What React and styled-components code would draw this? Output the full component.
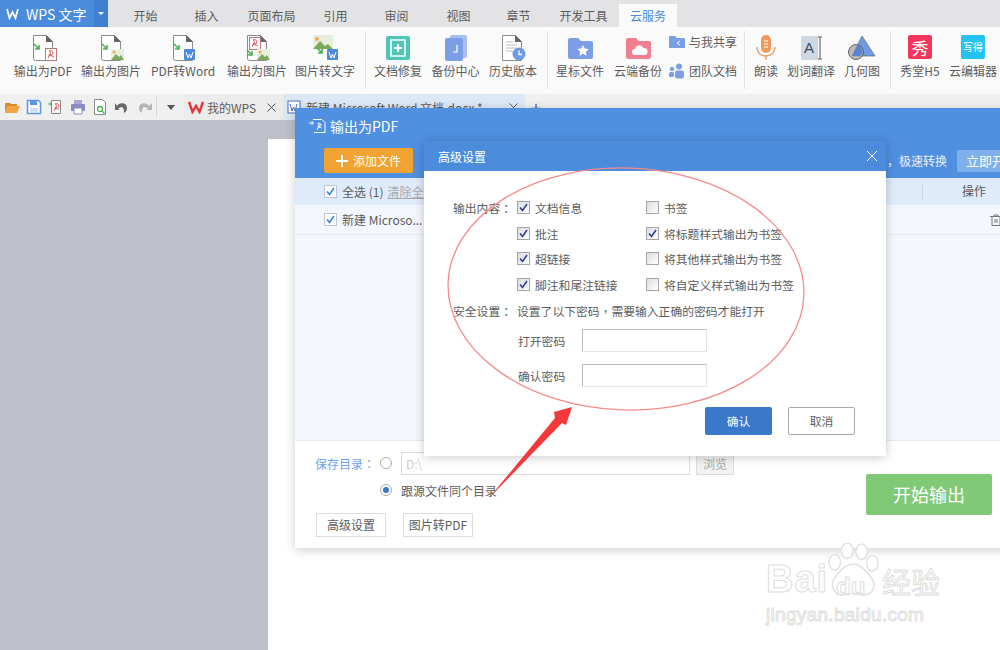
import styled, { createGlobalStyle } from "styled-components";

const GlobalStyle = createGlobalStyle`
    html, body {
        margin: 0;
        padding: 0;
        background: #fff;
    }
    * {
        box-sizing: border-box;
    }
    body {
        font-family: "Noto Sans CJK SC", "Liberation Sans", sans-serif;
        font-size: 12px;
        color: #5c5c5c;
    }
`;

const Screen = styled.div`
    position: relative;
    width: 1000px;
    height: 650px;
    overflow: hidden;
    display: flex;
    flex-direction: column;
    background: #bdc0c8;
`;

/* title bar */
const TitleBar = styled.div`
    height: 27px;
    flex: none;
    display: flex;
    background: #e3e3e5;
`;
const Logo = styled.div`
    width: 94px;
    display: flex;
    align-items: center;
    gap: 7px;
    padding-left: 6px;
    background: #4a8bdc;
    color: #fff;
    font-size: 14px;
    white-space: nowrap;
`;
const LogoArrow = styled.div`
    width: 14px;
    display: flex;
    align-items: center;
    justify-content: center;
    background: #3f7fd2;
    &::after {
        content: "";
        border: 3px solid transparent;
        border-top: 3px solid #fff;
        margin-top: 3px;
    }
`;
const Tabs = styled.div`
    display: flex;
    padding: 4px 0 0 7px;
`;
const Tab = styled.div`
    width: ${(p) => p.$w}px;
    display: flex;
    align-items: center;
    justify-content: center;
    color: ${(p) => (p.$active ? "#4a8bdc" : "#5c5c5c")};
    background: ${(p) => (p.$active ? "#fafafa" : "transparent")};
`;

/* ribbon */
const Ribbon = styled.div`
    height: 67px;
    flex: none;
    display: flex;
    padding: 4px 0 5px 9px;
    background: #fafafa;
`;
const Item = styled.div`
    width: ${(p) => p.$w}px;
    flex: none;
    display: flex;
    flex-direction: column;
    align-items: center;
    padding-top: 4px;
    svg {
        display: block;
    }
`;
const ItemLabel = styled.span`
    margin-top: 2px;
    line-height: 16px;
    white-space: nowrap;
`;
const Sep = styled.div`
    width: 1px;
    flex: none;
    margin: 0 3px 0 ${(p) => p.$left}px;
    background: #e2e2e2;
`;
const Stack = styled.div`
    width: 72px;
    flex: none;
    display: flex;
    flex-direction: column;
    gap: 11px;
    padding: 2px 0 0 2px;
`;
const StackRow = styled.div`
    display: flex;
    align-items: center;
    gap: 4px;
    line-height: 18px;
    white-space: nowrap;
`;
const Tile = styled.div`
    width: 24px;
    height: 24px;
    margin-bottom: 2px;
    border-radius: 2px;
    display: flex;
    align-items: center;
    justify-content: center;
    background: ${(p) => p.$bg};
    color: #fff;
    font-size: ${(p) => p.$size}px;
    line-height: 1;
`;

/* quick access bar */
const QuickBar = styled.div`
    height: 26px;
    flex: none;
    display: flex;
    align-items: stretch;
    padding-left: 4px;
    background: #f0f0f0;
`;
const QuickIcons = styled.div`
    display: flex;
    align-items: center;
    gap: 6px;
    width: 152px;
    flex: none;
`;
const QuickDivider = styled.div`
    width: 1px;
    height: 20px;
    align-self: center;
    background: #d5d5d5;
`;
const Drop = styled.div`
    width: 27px;
    display: flex;
    align-items: center;
    justify-content: center;
    &::after {
        content: "";
        border: 4px solid transparent;
        border-top: 5px solid #555;
        margin-top: 5px;
    }
`;
const DocTab = styled.div`
    width: ${(p) => p.$w}px;
    flex: none;
    display: flex;
    align-items: center;
    gap: 3px;
    padding: 0 7px 0 4px;
    white-space: nowrap;
    overflow: hidden;
    background: ${(p) => (p.$active ? "#dce8f6" : "#ececec")};
`;
const DocTabTitle = styled.span`
    flex: 1;
`;
const Plus = styled.span`
    margin-left: 6px;
    align-self: center;
    font-size: 18px;
    color: #666;
`;

/* document area */
const Canvas = styled.div`
    flex: 1;
    padding: 19px 0 0 268px;
    display: flex;
    background: #bdc0c8;
`;
const Paper = styled.div`
    flex: 1;
    background: #fff;
`;

/* PDF window */
const PdfWindow = styled.div`
    position: absolute;
    left: 295px;
    top: 108px;
    width: 760px;
    height: 440px;
    display: flex;
    flex-direction: column;
    background: #fff;
    box-shadow: 0 2px 10px rgba(0, 0, 0, 0.2);
`;
const PdfHeader = styled.div`
    height: 70px;
    flex: none;
    padding: 0 0 0 14px;
    background: #4f90e0;
    color: #fff;
`;
const PdfTitle = styled.div`
    height: 36px;
    display: flex;
    align-items: center;
    gap: 3px;
    font-size: 14px;
`;
const PdfTools = styled.div`
    display: flex;
    align-items: center;
    padding: 4px 0 0 15px;
`;
const AddButton = styled.div`
    width: 89px;
    height: 25px;
    display: flex;
    align-items: center;
    justify-content: center;
    gap: 5px;
    border-radius: 2px;
    background: #f0a330;
    color: #fff;
`;
const Promo = styled.span`
    margin-left: auto;
    color: #eaf2fc;
`;
const PromoButton = styled.div`
    width: 98px;
    height: 22px;
    margin: 0 0 0 10px;
    padding-left: 9px;
    line-height: 21px;
    font-size: 13px;
    border-radius: 2px;
    background: #7fb0ec;
    color: #fff;
    white-space: nowrap;
`;
const FileRow = styled.div`
    height: ${(p) => p.$h}px;
    flex: none;
    display: flex;
    align-items: center;
    gap: 5px;
    padding-left: 29px;
    background: ${(p) => (p.$head ? "#deebfb" : "#f4f8fe")};
    border-bottom: ${(p) => (p.$head ? "none" : "1px solid #e7ebf1")};
`;
const ClearLink = styled.span`
    color: #aaa;
    text-decoration: underline;
    margin-left: -1px;
`;
const HeadDivider = styled.div`
    position: absolute;
    left: 627px;
    top: 77px;
    width: 1px;
    height: 14px;
    background: #c7d2de;
`;
const HeadOperate = styled.span`
    position: absolute;
    left: 667px;
    top: 73px;
    line-height: 20px;
`;
const RowTrash = styled.span`
    position: absolute;
    left: 695px;
    top: 104px;
`;
const ListBody = styled.div`
    flex: 1;
    background: #f4f8fe;
    border-bottom: 1px solid #e7ebf1;
`;
const PdfFooter = styled.div`
    height: 107px;
    flex: none;
    padding: 10px 0 0 20px;
    position: relative;
`;
const SaveRow = styled.div`
    height: 24px;
    margin-top: ${(p) => p.$top || 0}px;
    display: flex;
    align-items: center;
    color: #6a9fe6;
`;
const SaveLabel = styled.span`
    width: 65px;
    flex: none;
    white-space: nowrap;
`;
const Colon = styled.span`
    font-family: "Noto Sans CJK TC", sans-serif;
`;
const Radio = styled.span`
    width: 12px;
    height: 12px;
    flex: none;
    display: flex;
    align-items: center;
    justify-content: center;
    border: 1px solid #aaa;
    border-radius: 50%;
    background: #fff;
    &::after {
        content: "";
        width: 6px;
        height: 6px;
        border-radius: 50%;
        background: ${(p) => (p.$on ? "#3a78c9" : "transparent")};
    }
`;
const PathInput = styled.div`
    width: 289px;
    height: 23px;
    margin-left: 9px;
    padding-left: 4px;
    line-height: 22px;
    border: 1px solid #ddd;
    color: #ccc;
`;
const BrowseButton = styled.div`
    width: 38px;
    height: 23px;
    margin-left: 6px;
    line-height: 21px;
    text-align: center;
    border: 1px solid #ddd;
    background: #f2f2f2;
    color: #aaa;
`;
const SameDir = styled.span`
    margin-left: 9px;
    color: #5c5c5c;
`;
const FooterButtons = styled.div`
    display: flex;
    gap: 17px;
    margin: 11px 0 0 1px;
`;
const PlainButton = styled.div`
    width: 70px;
    height: 24px;
    line-height: 22px;
    text-align: center;
    border: 1px solid #ddd;
`;
const StartButton = styled.div`
    position: absolute;
    left: 571px;
    top: 33px;
    width: 126px;
    height: 41px;
    border-radius: 2px;
    line-height: 41px;
    text-align: center;
    font-size: 18px;
    background: #7fc977;
    color: #fff;
`;

/* advanced settings dialog */
const Dialog = styled.div`
    position: absolute;
    left: 424px;
    top: 141px;
    width: 462px;
    height: 315px;
    display: flex;
    flex-direction: column;
    background: #fff;
    box-shadow: 0 1px 10px rgba(0, 0, 0, 0.22);
`;
const DialogHeader = styled.div`
    height: 30px;
    flex: none;
    display: flex;
    align-items: center;
    justify-content: space-between;
    padding: 0 8px 0 14px;
    background: #4b8cdc;
    color: #fff;
`;
const DialogBody = styled.div`
    flex: 1;
    padding: 24px 0 0 29px;
    display: flex;
    flex-direction: column;
    font-size: 11.8px;
`;
const OptionGrid = styled.div`
    display: grid;
    grid-template-columns: 64px 129px 1fr;
    grid-auto-rows: 25.5px;
    align-items: center;
`;
const FieldLabel = styled.span`
    white-space: nowrap;
`;
const Option = styled.label`
    display: flex;
    align-items: center;
    gap: 5px;
    white-space: nowrap;
`;
const Box = styled.span`
    width: 13px;
    height: 13px;
    flex: none;
    display: flex;
    align-items: center;
    justify-content: center;
    border: 1px solid ${(p) => (p.$light ? "#b9c6d6" : "#a5a5a5")};
    background: ${(p) => (p.$light ? "#fff" : "linear-gradient(135deg, #dcdcdc, #fff)")};
    color: ${(p) => (p.$light ? "#3a83de" : "#30409a")};
`;
const SecurityRow = styled.div`
    display: flex;
    align-items: center;
    height: 26px;
`;
const SecurityLabel = styled.span`
    width: 64px;
    flex: none;
    white-space: nowrap;
`;
const PasswordRow = styled.div`
    display: flex;
    align-items: center;
    margin: ${(p) => p.$top}px 0 0 65px;
`;
const PasswordLabel = styled.span`
    width: 64px;
    flex: none;
`;
const PasswordBox = styled.div`
    width: 125px;
    height: 23px;
    border: 1px solid #bbb;
    border-bottom-color: #e2e6ee;
    border-right-color: #e2e6ee;
    border-radius: 1px;
`;
const DialogActions = styled.div`
    display: flex;
    gap: 16px;
    margin: 20px 0 0 252px;
`;
const DialogButton = styled.div`
    width: 67px;
    height: 28px;
    line-height: ${(p) => (p.$primary ? 28 : 26)}px;
    text-align: center;
    border-radius: 2px;
    border: ${(p) => (p.$primary ? "none" : "1px solid #aaa")};
    background: ${(p) => (p.$primary ? "#3a78c9" : "#fff")};
    color: ${(p) => (p.$primary ? "#fff" : "#5c5c5c")};
`;

/* annotation and watermark lie over the windows */
const Annotation = styled.svg`
    position: absolute;
    left: 0;
    top: 0;
    pointer-events: none;
`;
const Watermark = styled.div`
    position: absolute;
    left: 766px;
    top: 543px;
    width: 190px;
    color: transparent;
    -webkit-text-stroke: 1px #dedede;
    font-family: "Liberation Sans", sans-serif;
    white-space: nowrap;
`;
const MarkBrand = styled.div`
    position: relative;
    height: 58px;
    display: flex;
    align-items: flex-end;
`;
const MarkBai = styled.span`
    width: 61px;
    font-size: 38px;
    font-weight: bold;
    line-height: 44px;
    letter-spacing: 1px;
`;
const MarkDu = styled.span`
    position: relative;
    width: 55px;
    padding-left: 9px;
    font-size: 24px;
    font-weight: bold;
    line-height: 28px;
`;
const MarkCn = styled.span`
    font-family: "Noto Sans CJK SC", sans-serif;
    font-size: 29px;
    line-height: 40px;
`;
const MarkUrl = styled.div`
    margin-top: 3px;
    font-size: 19px;
    line-height: 22px;
    letter-spacing: 0.3px;
`;
const PawMark = styled.svg`
    position: absolute;
    left: 60px;
    top: 0;
`;

const Paw = () => (
    <PawMark width="54" height="58" viewBox="0 0 56 60" fill="#fff" stroke="#e0e0e0" strokeWidth="1.5">
        <ellipse cx="22" cy="8" rx="6" ry="8" />
        <ellipse cx="37" cy="9" rx="6" ry="8" />
        <ellipse cx="9" cy="20" rx="6" ry="8" />
        <ellipse cx="48" cy="21" rx="6" ry="8" />
        <path d="M28 22c-9 0-14 8-19 14-6 8 0 19 9 17 6-1 14-1 20 0 10 2 15-9 9-17-5-6-10-14-19-14z" />
    </PawMark>
);

/* ribbon drawings */
const Arrow = ({ x = 6, y = 9 }) => (
    <path d={`M${x} ${y}l5 5m0-4v4h-4`} fill="none" stroke="#4caf50" strokeWidth="1.6" />
);
const Doc = () => (
    <>
        <path d="M5.5 .5h13l6 6v19h-17a2 2 0 0 1-2-2z" fill="#fff" stroke="#8a8a8a" />
        <path d="M18 0l7 7h-7z" fill="#666" />
    </>
);
const PdfBadge = ({ x = 17, y = 13 }) => (
    <g transform={`translate(${x} ${y})`}>
        <rect x=".5" y=".5" width="11" height="12" fill="#fff" stroke="#b77" />
        <path d="M3 10l2-4c1-2 0-3-1-3M4 3c2-1 4 0 4 2s-3 2-4 2c-1 1 3 0 5 2" fill="none" stroke="#d9534f" />
    </g>
);
const PicBadge = ({ x = 15, y = 14 }) => (
    <g transform={`translate(${x} ${y})`}>
        <rect width="13" height="11" fill="#e8f0dd" />
        <path d="M0 11l5-6 3 3 2-2 3 5z" fill="#7ea85b" />
        <circle cx="3" cy="3" r="1.5" fill="#f2a65a" />
    </g>
);
const WordBadge = ({ x = 16, y = 14 }) => (
    <g transform={`translate(${x} ${y})`}>
        <rect width="11" height="11" rx="1" fill="#4a8be0" />
        <path d="M2 3l2 6 1.500-4 1.500 4 2-6" fill="none" stroke="#fff" />
    </g>
);
const RibbonSvg = ({ children, w = 30 }) => (
    <svg width={w} height="26" viewBox={`0 0 ${w} 26`}>
        {children}
    </svg>
);
const PdfOut = () => (
    <RibbonSvg>
        <Doc />
        <Arrow />
        <PdfBadge />
    </RibbonSvg>
);
const PicOut = () => (
    <RibbonSvg>
        <Doc />
        <Arrow />
        <PicBadge />
    </RibbonSvg>
);
const WordOut = () => (
    <RibbonSvg>
        <Doc />
        <Arrow />
        <WordBadge />
    </RibbonSvg>
);
const PdfPic = () => (
    <RibbonSvg>
        <Doc />
        <g transform="translate(-4 -10)">
            <PdfBadge x={11} y={12} />
        </g>
        <Arrow x={5} y={15} />
        <PicBadge />
    </RibbonSvg>
);
const PicWord = () => (
    <RibbonSvg>
        <rect x="3" y="0" width="20" height="14" fill="#e6efdc" />
        <circle cx="7" cy="4" r="2" fill="#f2a65a" />
        <path d="M3 14l7-8 5 5 3-2 5 5z" fill="#7ea85b" />
        <Arrow x={7} y={13} />
        <WordBadge x={17} y={14} />
    </RibbonSvg>
);
const Repair = () => (
    <RibbonSvg w={26}>
        <rect x="1" y="1" width="24" height="24" rx="2" fill="#4fc5b8" />
        <rect x="6" y="5" width="14" height="16" fill="none" stroke="#fff" strokeWidth="1.500" />
        <path d="M13 9v8M9 13h8" stroke="#fff" strokeWidth="2" />
    </RibbonSvg>
);
const Backup = () => (
    <RibbonSvg w={24}>
        <rect x="6" y="0" width="17" height="23" rx="2" fill="#a9c0ee" />
        <rect x="1" y="3" width="18" height="23" rx="2" fill="#7b9fe6" />
        <path d="M13 10v7H9" fill="none" stroke="#fff" strokeWidth="1.200" />
    </RibbonSvg>
);
const History = () => (
    <RibbonSvg w={26}>
        <path d="M2.500 .5h13l6 6v19h-19z" fill="#fff" stroke="#8a8a8a" />
        <path d="M15 0l7 7h-7z" fill="#666" />
        <path d="M6 7h7M6 10h11M6 13h11M6 16h7" stroke="#bbb" />
        <circle cx="19" cy="19" r="6.500" fill="#6f9ae6" />
        <path d="M19 15.500v4h3" fill="none" stroke="#fff" strokeWidth="1.300" />
    </RibbonSvg>
);
const Folder = ({ color, children }) => (
    <RibbonSvg w={26}>
        <path d="M1 5a2 2 0 0 1 2-2h8l3 3h10a2 2 0 0 1 2 2v14a2 2 0 0 1-2 2H3a2 2 0 0 1-2-2z" fill={color} />
        {children}
    </RibbonSvg>
);
const Microphone = () => (
    <RibbonSvg w={20}>
        <rect x="5" y="0" width="10" height="18" rx="5" fill="#ee9a5d" />
        <path d="M8 6h4M8 9h4M8 12h4" stroke="#fff" />
        <path d="M1 12c0 6 4 9 9 9s9-3 9-9M10 21v4" fill="none" stroke="#ee9a5d" strokeWidth="1.300" />
    </RibbonSvg>
);
const SelectWord = () => (
    <RibbonSvg w={22}>
        <rect x="1" y="1" width="17" height="24" fill="#ccd8e6" />
        <text x="4" y="18" fontSize="15" fill="#3f4a5a" fontFamily="Liberation Sans">A</text>
        <path d="M18 2h4M20 2v22M18 24h4" stroke="#555" fill="none" />
    </RibbonSvg>
);
const Shapes = () => (
    <RibbonSvg>
        <path d="M15 1l13 20H5z" fill="#6f9ae6" stroke="#667" strokeWidth=".7" />
        <circle cx="9" cy="17" r="7.500" fill="#a5a5a5" fillOpacity=".75" stroke="#666" />
        <path d="M5 21h7.500a7.500 7.500 0 0 0 3-6L11 9z" fill="#5a84d0" />
    </RibbonSvg>
);

/* quick access drawings */
const Q = ({ children }) => (
    <svg width="16" height="16" viewBox="0 0 16 16" fill="none">
        {children}
    </svg>
);
const quickIcons = [
    <Q key="open">
        <path d="M1 4h5l1 1h6v2H4l-3 7z" fill="#d98a2b" />
        <path d="M4 7h12l-3 7H1z" fill="#f0a545" />
    </Q>,
    <Q key="save">
        <path d="M1.500 1.500h11l2 2v11h-13z" fill="#fff" stroke="#5d95e3" strokeWidth="1.500" />
        <rect x="4" y="2" width="7" height="4" fill="#5d95e3" />
        <rect x="4" y="9" width="8" height="5" fill="#cfe0f7" />
    </Q>,
    <Q key="pdf">
        <path d="M3.500 1.500h9v13h-9z" fill="#fff" stroke="#888" />
        <path d="M0 5h3M2 3.500L3.500 5 2 6.500" stroke="#4caf50" />
        <path d="M6 12l2-4c1-2 0-3-1-3M7 5c2-1 4 0 4 2s-3 2-4 2c-1 1 3 0 4 2" stroke="#d9534f" />
    </Q>,
    <Q key="print">
        <path d="M4 1h8v4H4z" fill="#a9a9d6" />
        <rect x="1" y="5" width="14" height="7" rx="1" fill="#8a8ac4" />
        <path d="M4 9h8v6H4z" fill="#fff" stroke="#8a8ac4" />
    </Q>,
    <Q key="preview">
        <path d="M2.500 .5h8l3 3v12h-11z" fill="#fff" stroke="#888" />
        <circle cx="8" cy="10" r="2.500" stroke="#4caf50" strokeWidth="1.300" />
        <path d="M10 12l2.500 2.500" stroke="#4caf50" strokeWidth="1.300" />
    </Q>,
    <Q key="undo">
        <path d="M3 7c2-4 10-4 10 2 0 2-1 4-3 5 0-3 0-6-3-6-1 0-2 1-3 2l2 1H1V4z" fill="#666" />
    </Q>,
    <Q key="redo">
        <path d="M13 7c-2-4-10-4-10 2 0 2 1 4 3 5 0-3 0-6 3-6 1 0 2 1 3 2l-2 1h6V4z" fill="#b5b5b5" />
    </Q>,
];

const Check = () => (
    <svg width="11" height="11" viewBox="0 0 11 11" fill="none">
        <path d="M2 5.500l2.500 3L9 2" stroke="currentColor" strokeWidth="1.600" />
    </svg>
);
const CheckBox = ({ on, light }) => <Box $light={light}>{on && <Check />}</Box>;

const CloseGlyph = () => (
    <svg width="9" height="9" viewBox="0 0 9 9" stroke="#555" fill="none">
        <path d="M.5 .5l8 8M8.500 .5l-8 8" />
    </svg>
);

const ribbonItems = [
    { w: 68, label: "输出为PDF", icon: <PdfOut /> },
    { w: 68, label: "输出为图片", icon: <PicOut /> },
    { w: 76, label: "PDF转Word", icon: <WordOut /> },
    { w: 72, label: "输出为图片", icon: <PdfPic /> },
    { w: 64, label: "图片转文字", icon: <PicWord /> },
    { sep: 8 },
    { w: 58, label: "文档修复", icon: <Repair /> },
    { w: 57, label: "备份中心", icon: <Backup /> },
    { w: 58, label: "历史版本", icon: <History /> },
    { sep: 5 },
    {
        w: 58,
        label: "星标文件",
        icon: (
            <Folder color="#7b9fe6">
                <path d="M16 10l1.800 3.600 4 .5-3 2.700.8 4-3.600-2-3.600 2 .8-4-3-2.700 4-.5z" fill="#fff" />
            </Folder>
        ),
    },
    {
        w: 58,
        label: "云端备份",
        icon: (
            <Folder color="#f0808f">
                <path d="M10 20a3 3 0 0 1 0-6 4.500 4.500 0 0 1 8.500-1 3.500 3.500 0 0 1 1 7z" fill="#fff" />
            </Folder>
        ),
    },
    { stack: true },
    { sep: 5 },
    { w: 36, label: "朗读", icon: <Microphone /> },
    { w: 54, label: "划词翻译", icon: <SelectWord /> },
    { w: 48, label: "几何图", icon: <Shapes /> },
    { sep: 4 },
    { w: 52, label: "秀堂H5", icon: <Tile $bg="#f5365c" $size={17}>秀</Tile> },
    { w: 54, label: "云编辑器", icon: <Tile $bg="#23c3f2" $size={10}>写得</Tile> },
];

const tabs = [
    { label: "开始", w: 61 },
    { label: "插入", w: 61 },
    { label: "页面布局", w: 69 },
    { label: "引用", w: 59 },
    { label: "审阅", w: 63 },
    { label: "视图", w: 61 },
    { label: "章节", w: 59 },
    { label: "开发工具", w: 71 },
];

export default function App() {
    return (
        <Screen>
            <GlobalStyle />
            <TitleBar>
                <Logo>
                    <svg width="13" height="12" viewBox="0 0 13 12" fill="none">
                        <path d="M1 1l2.500 9L6.500 4l3 6L12 1" stroke="#fff" strokeWidth="1.800" />
                    </svg>
                    <span>WPS 文字</span>
                </Logo>
                <LogoArrow />
                <Tabs>
                    {tabs.map((t) => (
                        <Tab key={t.label} $w={t.w}>{t.label}</Tab>
                    ))}
                    <Tab $w={58} $active>云服务</Tab>
                </Tabs>
            </TitleBar>

            <Ribbon>
                {ribbonItems.map((it, i) => {
                    if (it.sep) return <Sep key={i} $left={it.sep} />;
                    if (it.stack) {
                        return (
                            <Stack key={i}>
                                <StackRow>
                                    <svg width="16" height="14" viewBox="0 0 16 14">
                                        <path d="M0 2a1 1 0 0 1 1-1h5l2 2h7a1 1 0 0 1 1 1v9H0z" fill="#7b9fe6" />
                                        <path d="M11 6l-3 2 3 2" stroke="#fff" fill="none" />
                                    </svg>
                                    与我共享
                                </StackRow>
                                <StackRow>
                                    <svg width="16" height="16" viewBox="0 0 16 16" fill="#7b9fe6">
                                        <circle cx="3" cy="6" r="2.200" />
                                        <circle cx="10" cy="3.500" r="3" />
                                        <rect x="0" y="9" width="5" height="5" rx="1.500" />
                                        <rect x="6" y="7.500" width="9" height="8" rx="2" />
                                    </svg>
                                    团队文档
                                </StackRow>
                            </Stack>
                        );
                    }
                    return (
                        <Item key={i} $w={it.w}>
                            {it.icon}
                            <ItemLabel>{it.label}</ItemLabel>
                        </Item>
                    );
                })}
            </Ribbon>

            <QuickBar>
                <QuickIcons>{quickIcons}</QuickIcons>
                <QuickDivider />
                <Drop />
                <DocTab $w={99}>
                    <svg width="16" height="13" viewBox="0 0 16 13" fill="none">
                        <path d="M1 1l3.500 10L8 5l3.500 6L15 1" stroke="#e0383e" strokeWidth="2.400" />
                    </svg>
                    <DocTabTitle>我的WPS</DocTabTitle>
                    <CloseGlyph />
                </DocTab>
                <DocTab $w={242} $active>
                    <svg width="16" height="14" viewBox="0 0 16 14">
                        <rect x="1" y="1" width="12" height="12" fill="#fff" stroke="#4a6fb5" />
                        <path d="M3 4l2 7 1.500-4L8 11l2-7" fill="none" stroke="#4a6fb5" />
                    </svg>
                    <DocTabTitle>新建 Microsoft Word 文档.docx *</DocTabTitle>
                    <CloseGlyph />
                </DocTab>
                <Plus>+</Plus>
            </QuickBar>

            <Canvas>
                <Paper />
            </Canvas>

            <PdfWindow>
                <PdfHeader>
                    <PdfTitle>
                        <svg width="18" height="16" viewBox="0 0 18 16" fill="none" stroke="#fff">
                            <path d="M4 1.500h9l3 3v10H5" />
                            <path d="M0 5h4M2.500 3L4.500 5l-2 2" />
                            <path d="M8 12l2-4c.8-2-.5-2.500-1.500-2M9 5.500c2-.8 3 .2 3 1.500s-2 1.500-3 1.500c-.5.800 2 .5 3.500 1.500" />
                        </svg>
                        输出为PDF
                    </PdfTitle>
                    <PdfTools>
                        <AddButton>
                            <svg width="12" height="12" viewBox="0 0 12 12">
                                <path d="M6 0v12M0 6h12" stroke="#fff" strokeWidth="2" />
                            </svg>
                            添加文件
                        </AddButton>
                        <Promo>，极速转换</Promo>
                        <PromoButton>立即开通</PromoButton>
                    </PdfTools>
                </PdfHeader>
                <FileRow $h={27} $head>
                    <CheckBox on light />
                    <span>全选 (1)</span>
                    <ClearLink>清除全部</ClearLink>
                </FileRow>
                <FileRow $h={30}>
                    <CheckBox on light />
                    <span>新建 Microso...</span>
                </FileRow>
                <HeadDivider />
                <HeadOperate>操作</HeadOperate>
                <RowTrash>
                    <svg width="12" height="12" viewBox="0 0 12 12" fill="none" stroke="#777">
                        <path d="M0 2.500h12M4 2.500V1h4v1.500M2 2.500v9h8v-9M5 5v4M7 5v4" />
                    </svg>
                </RowTrash>
                <ListBody />
                <PdfFooter>
                    <SaveRow>
                        <SaveLabel>保存目录<Colon>：</Colon></SaveLabel>
                        <Radio />
                        <PathInput>D:\</PathInput>
                        <BrowseButton>浏览</BrowseButton>
                    </SaveRow>
                    <SaveRow $top={3}>
                        <SaveLabel />
                        <Radio $on />
                        <SameDir>跟源文件同个目录</SameDir>
                    </SaveRow>
                    <FooterButtons>
                        <PlainButton>高级设置</PlainButton>
                        <PlainButton>图片转PDF</PlainButton>
                    </FooterButtons>
                    <StartButton>开始输出</StartButton>
                </PdfFooter>
            </PdfWindow>

            <Dialog>
                <DialogHeader>
                    <span>高级设置</span>
                    <svg width="12" height="12" viewBox="0 0 12 12" stroke="#fff" fill="none">
                        <path d="M1 1l10 10M11 1L1 11" />
                    </svg>
                </DialogHeader>
                <DialogBody>
                    <OptionGrid>
                        <FieldLabel>输出内容<Colon>：</Colon></FieldLabel>
                        <Option><CheckBox on />文档信息</Option>
                        <Option><CheckBox />书签</Option>
                        <span />
                        <Option><CheckBox on />批注</Option>
                        <Option><CheckBox on />将标题样式输出为书签</Option>
                        <span />
                        <Option><CheckBox on />超链接</Option>
                        <Option><CheckBox />将其他样式输出为书签</Option>
                        <span />
                        <Option><CheckBox on />脚注和尾注链接</Option>
                        <Option><CheckBox />将自定义样式输出为书签</Option>
                    </OptionGrid>
                    <SecurityRow>
                        <SecurityLabel>安全设置<Colon>：</Colon></SecurityLabel>
                        <span>设置了以下密码<Colon>，</Colon>需要输入正确的密码才能打开</span>
                    </SecurityRow>
                    <PasswordRow $top={6}>
                        <PasswordLabel>打开密码</PasswordLabel>
                        <PasswordBox />
                    </PasswordRow>
                    <PasswordRow $top={12}>
                        <PasswordLabel>确认密码</PasswordLabel>
                        <PasswordBox />
                    </PasswordRow>
                    <DialogActions>
                        <DialogButton $primary>确认</DialogButton>
                        <DialogButton>取消</DialogButton>
                    </DialogActions>
                </DialogBody>
            </Dialog>

            <Annotation width="1000" height="650" viewBox="0 0 1000 650">
                <ellipse cx="626" cy="289" rx="178" ry="121" fill="none" stroke="#f58a8a" strokeWidth="1.300" transform="rotate(2 626 289)" />
                <path d="M489 498L555 418 554 412 572 407 566 425 562 423Z" fill="#f5383a" />
            </Annotation>

            <Watermark>
                <MarkBrand>
                    <Paw />
                    <MarkBai>Bai</MarkBai>
                    <MarkDu>du</MarkDu>
                    <MarkCn>经验</MarkCn>
                </MarkBrand>
                <MarkUrl>jingyan.baidu.com</MarkUrl>
            </Watermark>
        </Screen>
    );
}
